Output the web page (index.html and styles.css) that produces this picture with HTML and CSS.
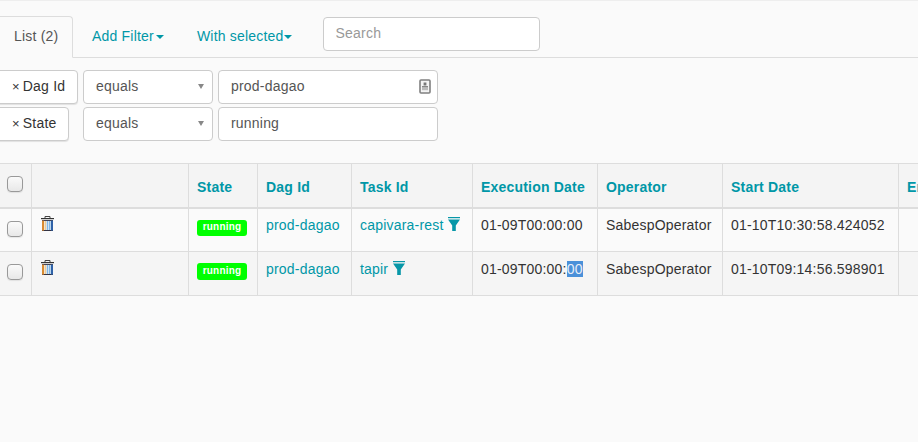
FILE: index.html
```html
<!DOCTYPE html>
<html lang="en">
<head>
<meta charset="utf-8">
<title>Task Instances</title>
<link rel="stylesheet" href="styles.css">
</head>
<body>
<div class="page">
  <nav class="tabs">
    <a class="tab active">List (2)</a>
    <a class="tab link filter-tab">Add Filter<span class="caret caret-wide"></span></a>
    <a class="tab link selected-tab">With selected<span class="caret"></span></a>
    <div class="search"><input class="field search-input" type="text" placeholder="Search"></div>
  </nav>
  <div class="filters">
    <div class="filter-row">
      <a class="pill pill-dag"><span class="times">×</span>Dag Id</a>
      <div class="field select">equals<span class="arrow"></span></div>
      <div class="field value"><span>prod-dagao</span>
        <svg class="contact" width="12" height="15" viewBox="0 0 12 15"><rect x="1" y="1" width="10" height="13" rx="1" fill="#f4f4f4" stroke="#808080" stroke-width="1.6"/><rect x="4.6" y="3.5" width="2.8" height="3" fill="#777"/><rect x="3" y="7" width="6" height="1.6" fill="#888"/><rect x="3" y="8.6" width="6" height="2.6" fill="#bbb"/></svg>
      </div>
    </div>
    <div class="filter-row">
      <a class="pill pill-state"><span class="times">×</span>State</a>
      <div class="field select">equals<span class="arrow"></span></div>
      <div class="field value"><span>running</span></div>
    </div>
  </div>
  <table class="grid">
    <colgroup>
      <col class="c-check"><col class="c-act"><col class="c-state"><col class="c-dag"><col class="c-task"><col class="c-exec"><col class="c-op"><col class="c-start"><col class="c-end">
    </colgroup>
    <thead>
      <tr>
        <th class="cell-check"><span class="check"></span></th>
        <th></th>
        <th>State</th>
        <th>Dag Id</th>
        <th>Task Id</th>
        <th>Execution Date</th>
        <th>Operator</th>
        <th>Start Date</th>
        <th>End Date</th>
      </tr>
    </thead>
    <tbody>
      <tr class="odd">
        <td class="cell-check"><span class="check"></span></td>
        <td class="cell-act"><svg class="trash" width="13" height="15" viewBox="0 0 13 15"><path d="M4 2.5V.5h5v2" fill="none" stroke="#444" stroke-width="1"/><rect x="0" y="2" width="13" height="1.2" fill="#333"/><rect x="1" y="4" width="11" height="11" fill="#f4f4f4"/><rect x="1" y="4" width="11" height="1" fill="#445"/><rect x="1" y="14" width="11" height="1" fill="#334"/><rect x="1" y="4.6" width="2" height="10" fill="#d98a30"/><rect x="3.6" y="5" width="1.6" height="9" fill="#eacb98"/><rect x="5.8" y="5" width="1.5" height="9" fill="#7fb6e6"/><rect x="8" y="5" width="1.5" height="9" fill="#7fb6e6"/><rect x="10" y="4.6" width="2" height="10" fill="#2f62a8"/></svg></td>
        <td><span class="badge">running</span></td>
        <td><a class="lnk">prod-dagao</a></td>
        <td><a class="lnk">capivara-rest</a><svg class="funnel" width="12" height="14" viewBox="0 0 12 14"><rect x="0" y="0" width="12" height="1.2" fill="#0797a8"/><path d="M0 2.4h12L7.8 8.5V14H4.2V8.5z" fill="#0797a8"/></svg></td>
        <td>01-09T00:00:00</td>
        <td>SabespOperator</td>
        <td>01-10T10:30:58.424052</td>
        <td></td>
      </tr>
      <tr class="even">
        <td class="cell-check"><span class="check"></span></td>
        <td class="cell-act"><svg class="trash" width="13" height="15" viewBox="0 0 13 15"><path d="M4 2.5V.5h5v2" fill="none" stroke="#444" stroke-width="1"/><rect x="0" y="2" width="13" height="1.2" fill="#333"/><rect x="1" y="4" width="11" height="11" fill="#f4f4f4"/><rect x="1" y="4" width="11" height="1" fill="#445"/><rect x="1" y="14" width="11" height="1" fill="#334"/><rect x="1" y="4.6" width="2" height="10" fill="#d98a30"/><rect x="3.6" y="5" width="1.6" height="9" fill="#eacb98"/><rect x="5.8" y="5" width="1.5" height="9" fill="#7fb6e6"/><rect x="8" y="5" width="1.5" height="9" fill="#7fb6e6"/><rect x="10" y="4.6" width="2" height="10" fill="#2f62a8"/></svg></td>
        <td><span class="badge">running</span></td>
        <td><a class="lnk">prod-dagao</a></td>
        <td><a class="lnk">tapir</a><svg class="funnel" width="12" height="14" viewBox="0 0 12 14"><rect x="0" y="0" width="12" height="1.2" fill="#0797a8"/><path d="M0 2.4h12L7.8 8.5V14H4.2V8.5z" fill="#0797a8"/></svg></td>
        <td>01-09T00:00:<span class="sel">00</span></td>
        <td>SabespOperator</td>
        <td>01-10T09:14:56.598901</td>
        <td></td>
      </tr>
    </tbody>
  </table>
</div>
</body>
</html>
```
FILE: styles.css
```css
html, body {
  margin: 0;
  padding: 0;
  height: 100%;
  overflow: hidden;
  background: #fafafa;
}
body {
  font-family: "Liberation Sans", Arial, sans-serif;
  font-size: 14px;
  line-height: 20px;
  letter-spacing: .2px;
  color: #333;
}
.page {
  border-top: 1px solid #eee;
  width: 1100px;
}
.tabs {
  display: flex;
  align-items: flex-start;
  height: 57px;
  box-sizing: border-box;
  border-bottom: 1px solid #ddd;
  padding-top: 15px;
}
.tab {
  height: 41px;
  box-sizing: border-box;
  padding: 10px 15px;
  white-space: nowrap;
}
.active {
  width: 77px;
  margin-left: -4px;
  padding: 9px 0 0 17px;
  border: 1px solid #ddd;
  border-bottom-color: #fafafa;
  border-radius: 4px 4px 0 0;
  color: #555;
  height: 42px;
}
.link {
  color: #0097a7;
}
.filter-tab {
  margin-left: 4px;
}
.selected-tab {
  margin-left: 3px;
}
.caret {
  display: inline-block;
  margin-left: 0;
  vertical-align: middle;
  border-top: 4px solid #0097a7;
  border-left: 4px solid transparent;
  border-right: 4px solid transparent;
}
.caret-wide {
  margin-left: 2px;
}
.search {
  margin-left: 16px;
  margin-top: 1px;
}
.field {
  box-sizing: border-box;
  height: 34px;
  background: #fff;
  border: 1px solid #ccc;
  border-radius: 4px;
  font-size: 14px;
  color: #555;
  font-family: inherit;
  letter-spacing: inherit;
  padding: 5px 12px;
}
.search-input {
  display: block;
  width: 217px;
  outline: none;
  padding: 5px 12px 7px;
}
.search-input::placeholder {
  color: #999;
}
.filters {
  display: flex;
  flex-direction: column;
  gap: 3px;
  margin-top: 12px;
}
.filter-row {
  display: flex;
  gap: 5px;
}
.pill {
  box-sizing: border-box;
  height: 34px;
  margin-left: -4px;
  background: #fff;
  border: 1px solid #ccc;
  border-radius: 4px;
  box-shadow: 0 1px 1px rgba(0,0,0,.1);
  padding: 5px 0 5px 15px;
  color: #333;
  white-space: nowrap;
}
.pill-dag {
  width: 82px;
}
.pill-state {
  width: 73px;
  margin-right: 9px;
}
.times {
  font-size: 13px;
  margin-right: 3px;
}
.select {
  width: 130px;
  position: relative;
}
.arrow {
  position: absolute;
  right: 8px;
  top: 13px;
  border-top: 5px solid #888;
  border-left: 3px solid transparent;
  border-right: 3px solid transparent;
}
.value {
  width: 220px;
  position: relative;
}
.contact {
  position: absolute;
  right: 6px;
  top: 8px;
}
.grid {
  margin-top: 22px;
  border-collapse: collapse;
  table-layout: fixed;
  width: 1080px;
  margin-left: -1px;
}
.c-check { width: 32px; }
.c-act { width: 157px; }
.c-state { width: 69px; }
.c-dag { width: 94px; }
.c-task { width: 121px; }
.c-exec { width: 125px; }
.c-op { width: 125px; }
.c-start { width: 176px; }
.c-end { width: 181px; }
.grid th, .grid td {
  border: 1px solid #ddd;
  padding: 8px;
  text-align: left;
  vertical-align: top;
  white-space: nowrap;
}
.grid th {
  height: 44px;
  box-sizing: border-box;
  background: #f4f4f4;
  color: #0097a7;
  font-weight: bold;
  vertical-align: middle;
  border-bottom: 2px solid #ddd;
  padding-top: 12px;
}
.grid td {
  height: 44px;
  box-sizing: border-box;
  padding-top: 6px;
}
.grid .even td {
  padding-top: 7px;
}
.odd td { background: #fafafa; }
.even td { background: #f5f5f5; }
.lnk { color: #0097a7; }
.grid th.cell-check { padding: 0 2px 6px 0; text-align: center; }
.grid td.cell-check { padding: 0 2px 5px 0; text-align: center; vertical-align: middle; }
.grid .even td.cell-check { padding-top: 0; }
.check {
  display: inline-block;
  box-sizing: border-box;
  width: 16px;
  height: 16px;
  vertical-align: middle;
  border: 1px solid #999;
  border-radius: 4px;
  background: linear-gradient(#fafafa, #e8e8e8);
  box-shadow: 0 1px 1px rgba(0,0,0,.08);
}
.trash { display: block; margin-top: 1px; margin-left: 1px; }
.badge {
  display: inline-block;
  box-sizing: border-box;
  width: 50px;
  height: 16px;
  margin-top: 5px;
  background: #0f0;
  border-radius: 3px;
  color: #fff;
  font-size: 10px;
  font-weight: bold;
  line-height: 14px;
  text-align: center;
  vertical-align: top;
}
.even .badge {
  height: 17px;
  line-height: 15px;
  margin-top: 4px;
}
.funnel {
  margin-left: 5px;
  vertical-align: top;
  margin-top: 2px;
}
.odd .funnel {
  margin-left: 4px;
}
.sel {
  background: #4a90d9;
  color: #e8eef8;
}
```
